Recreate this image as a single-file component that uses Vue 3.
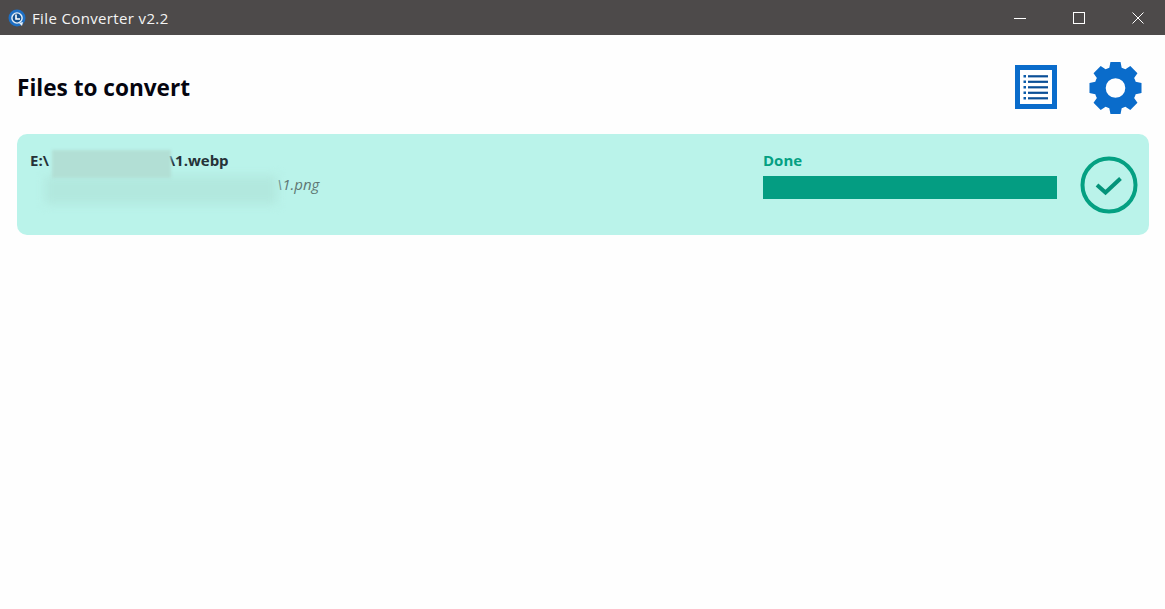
<script setup>
const listRows = [0, 1, 2, 3, 4]

function gearPath() {
  const c = 27, outer = 27, root = 21.5, teeth = 8
  const pt = (r, deg) => {
    const a = (deg - 90) * Math.PI / 180
    return `${(c + r * Math.cos(a)).toFixed(2)} ${(c + r * Math.sin(a)).toFixed(2)}`
  }
  let d = ''
  for (let i = 0; i < teeth; i++) {
    const m = i * 360 / teeth
    d += `${i ? 'L' : 'M'}${pt(root, m - 17)}L${pt(outer, m - 11)}L${pt(outer, m + 11)}L${pt(root, m + 17)}`
    d += `A${root} ${root} 0 0 1 ${pt(root, m + 28)}`
  }
  return d + 'ZM27 17a10 10 0 1 0 0 20 10 10 0 0 0 0-20Z'
}
const gear = gearPath()
</script>

<template>
  <div class="window">
    <header class="titlebar">
      <div class="title-left">
        <svg class="app-icon" width="18" height="18" viewBox="0 0 18 18">
          <circle cx="9" cy="9" r="8.5" fill="#1d6fc4" />
          <circle cx="9" cy="9" r="5.8" fill="#e8f0f8" />
          <circle cx="9" cy="9" r="4.4" fill="#14518f" />
          <path d="M8 5.5V10h4" fill="none" stroke="#fff" stroke-width="1.6" />
          <path d="M11 14l4-1-1 4z" fill="#e8f0f8" />
        </svg>
        <span class="app-title">File Converter v2.2</span>
      </div>
      <div class="window-controls">
        <span class="ctl"><svg width="12" height="12" viewBox="0 0 12 12"><path d="M0 6.5h12" stroke="#fff" stroke-width="1" /></svg></span>
        <span class="ctl"><svg width="12" height="12" viewBox="0 0 12 12"><rect x="0.5" y="0.5" width="11" height="11" fill="none" stroke="#fff" stroke-width="1" /></svg></span>
        <span class="ctl"><svg width="12" height="12" viewBox="0 0 12 12"><path d="M0.5 0.5l11 11M11.5 0.5l-11 11" stroke="#fff" stroke-width="1" /></svg></span>
      </div>
    </header>

    <main class="content">
      <div class="heading-row">
        <h1 class="heading">Files to convert</h1>
        <div class="tools">
          <svg class="list-icon" width="42" height="44" viewBox="0 0 42 44">
            <rect x="2.5" y="2.5" width="37" height="39" fill="#fff" stroke="#0a6ccb" stroke-width="5" />
            <g v-for="r in listRows" :key="r">
              <rect x="8.5" :y="10 + r * 5.5" width="2.5" height="2.5" fill="#0a5cab" />
              <rect x="13" :y="10.2 + r * 5.5" width="20" height="2.2" fill="#0a4f97" />
            </g>
          </svg>
          <svg class="gear-icon" width="53" height="54" viewBox="0 0 54 54">
            <path fill="#0a6ccb" fill-rule="evenodd" :d="gear" />
          </svg>
        </div>
      </div>

      <section class="job">
        <div class="paths">
          <div class="source">E:\<span class="gap-a"></span>\1.webp</div>
          <div class="target"><span class="gap-b"></span>\1.png</div>
          <div class="blur blur-b"></div>
          <div class="blur blur-a"></div>
        </div>
        <div class="status">
          <div class="status-label">Done</div>
          <div class="bar"></div>
        </div>
        <svg class="check" width="58" height="58" viewBox="0 0 58 58">
          <circle cx="29" cy="29" r="26.5" fill="none" stroke="#04a082" stroke-width="4" />
          <path d="M17 29l8.5 7.5 15-14" fill="none" stroke="#04937a" stroke-width="4" />
        </svg>
      </section>
    </main>
  </div>
</template>

<style scoped>
.window {
  width: 1165px;
  height: 609px;
  background: #fefefe;
  font-family: "Open Sans", "Noto Sans", sans-serif;
  overflow: hidden;
}
.titlebar {
  height: 35px;
  background: #4d4a4a;
  display: flex;
  align-items: center;
  justify-content: space-between;
}
.title-left {
  display: flex;
  align-items: center;
  padding-left: 8px;
  gap: 6px;
}
.app-title {
  color: #f4f4f4;
  font-size: 15px;
  letter-spacing: 0.36px;
}
.window-controls {
  display: flex;
  padding-right: 21px;
  gap: 47px;
}
.ctl {
  display: block;
  width: 12px;
  height: 12px;
}
.ctl svg { display: block; }
.content {
  padding: 0 16px 0 17px;
}
.heading-row {
  height: 99px;
  display: flex;
  align-items: center;
  justify-content: space-between;
}
.heading {
  margin: 5px 0 0;
  font-size: 22.6px;
  font-weight: 700;
  color: #05050f;
}
.tools {
  display: flex;
  align-items: flex-start;
  gap: 32px;
  padding-right: 7px;
}
.list-icon { display: block; margin-top: 11px; }
.gear-icon { display: block; margin-top: 7px; }
.job {
  height: 101px;
  background: #baf3ea;
  border-radius: 10px;
  display: flex;
  position: relative;
}
.paths {
  width: 746px;
  padding: 16px 0 0 13px;
  position: relative;
  box-sizing: border-box;
}
.source {
  font-size: 15px;
  font-weight: 700;
  color: #263238;
  line-height: 20px;
  display: flex;
}
.gap-a { width: 120px; }
.target {
  margin-top: 4px;
  font-size: 15px;
  font-style: italic;
  color: #5f7773;
  line-height: 20px;
  display: flex;
}
.gap-b { width: 247px; }
.blur {
  position: absolute;
}
.blur-a {
  left: 35px;
  top: 16px;
  width: 119px;
  height: 28px;
  background: #b2dfd5;
  filter: blur(1.5px);
}
.blur-b {
  left: 28px;
  top: 42px;
  width: 232px;
  height: 28px;
  background: #b2e8de;
  filter: blur(5px);
}
.status {
  width: 294px;
  padding-top: 16px;
}
.status-label {
  font-size: 15px;
  font-weight: 700;
  color: #04a082;
  line-height: 20px;
}
.bar {
  margin-top: 6px;
  height: 23px;
  background: #049d82;
}
.check {
  display: block;
  margin: 22px 0 0 23px;
}
</style>

<style>
html, body { background: #fefefe; }
</style>
